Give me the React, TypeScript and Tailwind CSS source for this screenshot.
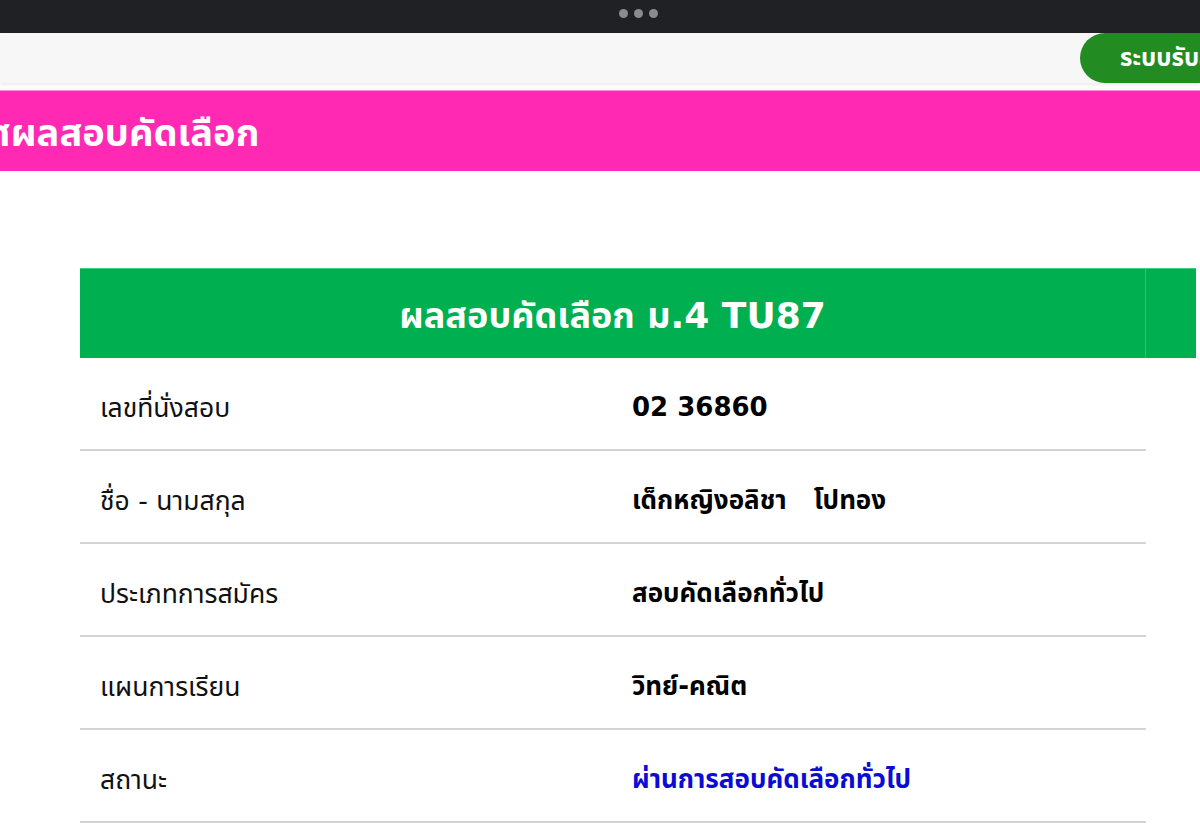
import React from "react";

const rows = [
  { label: "เลขที่นั่งสอบ", value: "02 36860" },
  { label: "ชื่อ - นามสกุล", value: "เด็กหญิงอลิชา\u00a0\u00a0\u00a0โปทอง" },
  { label: "ประเภทการสมัคร", value: "สอบคัดเลือกทั่วไป" },
  { label: "แผนการเรียน", value: "วิทย์-คณิต" },
  { label: "สถานะ", value: "ผ่านการสอบคัดเลือกทั่วไป", blue: true },
];

export default function App() {
  return (
    <div
      className="w-[1200px] h-[833px] overflow-hidden bg-white"
      style={{ fontFamily: '"DejaVu Sans", "Noto Sans Thai", "Noto Sans", sans-serif' }}
    >
      {/* top browser strip */}
      <div className="h-[33px] bg-[#202124] flex justify-center items-start pt-[9px] pl-[76px]">
        <div className="flex gap-[6px]">
          <span className="w-[9px] h-[9px] rounded-full bg-[#8a8b8d]" />
          <span className="w-[9px] h-[9px] rounded-full bg-[#8a8b8d]" />
          <span className="w-[9px] h-[9px] rounded-full bg-[#8a8b8d]" />
        </div>
      </div>

      {/* navbar */}
      <div className="h-[50px] bg-[#f7f7f7] flex justify-end shadow-[0_2px_3px_rgba(0,0,0,0.08)]">
        <div className="w-[120px] h-[50px] bg-[#228b22] rounded-l-[40px] overflow-hidden whitespace-nowrap pl-[40px] flex items-center">
          <span className="text-white text-[24px] font-bold">ระบบรับสมัคร</span>
        </div>
      </div>

      {/* pink title bar */}
      <div className="mt-[7px] h-[81px] bg-[#ff29b4] border-t border-[#ff8ad6] overflow-hidden whitespace-nowrap flex items-center pt-[4px]">
        <span className="-ml-[112px] text-white text-[38px] font-bold">ประกาศผลสอบคัดเลือก</span>
      </div>

      {/* result card */}
      <div className="mt-[97px] ml-[80px] w-[1116px]">
        <div className="flex h-[90px] bg-[#00b050] border-t border-[#3fd07c]">
          <div className="w-[1066px] border-r border-[#2cc46c] flex items-center justify-center pt-[4px]">
            <span className="text-white text-[36px] font-bold">ผลสอบคัดเลือก ม.4 TU87</span>
          </div>
          <div className="flex-1" />
        </div>
        <div className="w-[1066px]">
          {rows.map((r) => (
            <div key={r.label} className="flex items-center h-[93px] pt-[8px] border-b-2 border-[#d3d3d3]">
              <div className="w-[552px] pl-[20px] text-[26.5px] text-[#111]">{r.label}</div>
              <div className={`text-[26px] font-bold ${r.blue ? "text-[#0b0bd6]" : "text-black"}`}>{r.value}</div>
            </div>
          ))}
        </div>
      </div>
    </div>
  );
}
